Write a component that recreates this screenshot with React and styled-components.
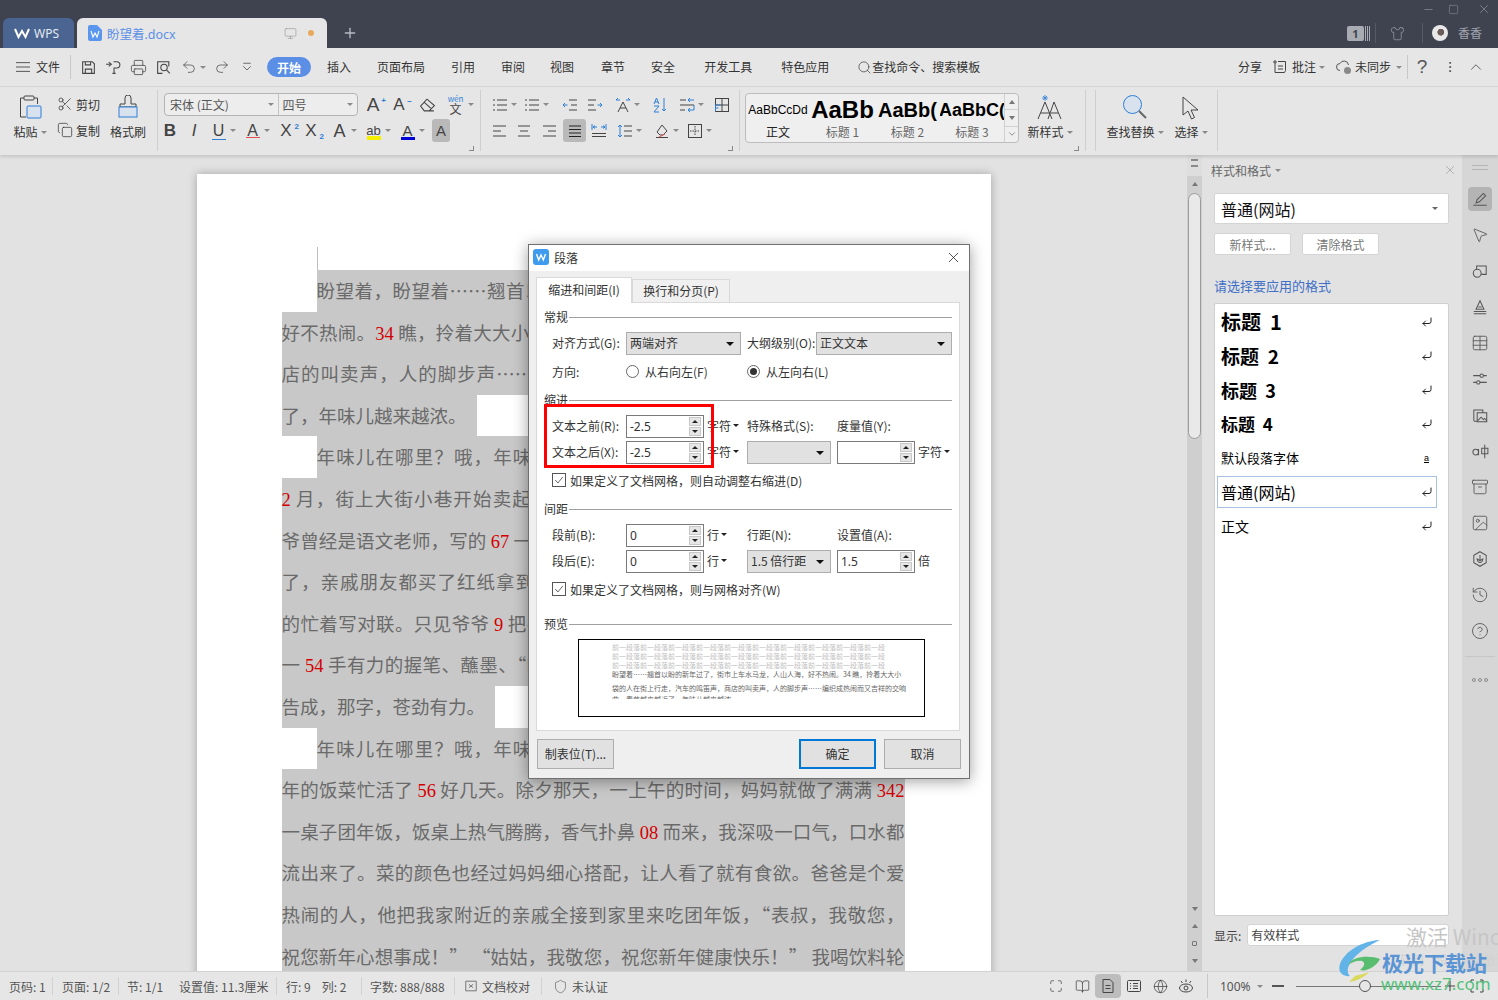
import styled, { createGlobalStyle } from "styled-components";
import {
  Scissors,
  Printer,
  Undo2,
  Redo2,
  Search,
  Shirt,
  Monitor,
  X,
  Plus,
  History,
  Image,
  Table,
  Archive,
  Minus,
  Square,
  ChevronUp,
  ChevronDown,
  CornerDownLeft,
  MoreVertical,
  Globe,
  Shield,
  BookOpen,
  CircleHelp,
  Maximize,
  MousePointer2,
  Copy,
} from "lucide-react";

const UI_FONT = `"Noto Sans", "Noto Sans CJK SC", sans-serif`;
const CJK_FONT = `"Noto Sans CJK SC", "Noto Sans", sans-serif`;

const GlobalStyle = createGlobalStyle`
  html, body { margin: 0; padding: 0; background: #e2e2e2; }
  body { font-family: ${UI_FONT}; font-size: 12px; color: #333; }
  * { box-sizing: border-box; }
`;

/* ---------- shell ---------- */
const Shell = styled.div`
  position: relative;
  width: 1498px;
  height: 1000px;
  overflow: hidden;
  display: flex;
  flex-direction: column;
`;

/* ---------- title bar ---------- */
const TitleBar = styled.div`
  height: 48px;
  flex: none;
  background: #3f4350;
  display: flex;
  align-items: flex-end;
  padding-left: 3px;
`;
const WpsTab = styled.div`
  width: 71px;
  height: 30px;
  background: #4a6591;
  border-radius: 6px 6px 0 0;
  color: #e4e9f2;
  display: flex;
  align-items: center;
  padding-left: 10px;
  gap: 3px;
  font-size: 12px;
`;
const DocTab = styled.div`
  width: 250px;
  height: 30px;
  margin-left: 3px;
  background: #e6e6e6;
  border-radius: 6px 6px 0 0;
  display: flex;
  align-items: center;
  padding: 0 10px 0 11px;
  color: #5b8fe6;
  font-size: 12.5px;
  gap: 5px;
`;
const DocTabName = styled.span`
  flex: 1;
`;
const SaveDot = styled.i`
  width: 6px;
  height: 6px;
  margin: 0 3px 0 6px;
  border-radius: 50%;
  background: #e9a860;
`;
const NewTab = styled.div`
  margin: 0 0 7px 15px;
  color: #b9bcc4;
  height: 16px;
`;
const TitleRight = styled.div`
  margin-left: auto;
  align-self: stretch;
  display: flex;
  flex-direction: column;
  color: #9fa3ad;
`;
const WinControls = styled.div`
  height: 18px;
  display: flex;
  justify-content: flex-end;
  align-items: center;
  padding-right: 2px;
`;
const WinBtn = styled.span`
  width: 24px;
  margin-left: ${(p) => p.$ml || 0}px;
  display: inline-flex;
  justify-content: center;
`;
const UserRow = styled.div`
  flex: 1;
  display: flex;
  align-items: center;
  padding-right: 16px;
  font-size: 12px;
`;
const LevelBadge = styled.div`
  width: 17px;
  height: 15px;
  border-radius: 2px;
  background: #a9abb3;
  color: #3f4350;
  font-size: 11px;
  font-weight: 700;
  text-align: center;
  line-height: 15px;
`;
const BadgeBars = styled.div`
  width: 5px;
  height: 15px;
  margin-left: 1px;
  border-left: 1px solid #a9abb3;
  border-right: 1px solid #a9abb3;
  background: linear-gradient(90deg, transparent 40%, #a9abb3 40%, #a9abb3 60%, transparent 60%);
`;
const TitleSep = styled.i`
  width: 1px;
  height: 20px;
  background: #565a67;
  margin: 0 ${(p) => p.$r}px 0 ${(p) => p.$l}px;
`;
const Avatar = styled.div`
  width: 16px;
  height: 16px;
  border-radius: 50%;
  margin-right: 10px;
  background: radial-gradient(circle at 55% 45%, #6b5a5a 0 25%, #e8e8e8 30%);
`;

/* ---------- menu row ---------- */
const MenuBar = styled.div`
  height: 39px;
  flex: none;
  background: #e6e6e6;
  border-bottom: 1px solid #d6d6d6;
  display: flex;
  align-items: center;
  padding-left: 16px;
  color: #333;
`;
const MenuText = styled.span`
  margin-left: ${(p) => p.$ml || 0}px;
  font-size: 12px;
  line-height: 16px;
  white-space: nowrap;
  font-family: ${CJK_FONT};
`;
const HelpMark = styled.span`
  font-size: 19px;
  line-height: 20px;
  font-weight: 300;
  color: #555;
  font-family: "Liberation Sans", sans-serif;
`;
const StartPill = styled.span`
  margin-left: 7px;
  width: 44px;
  height: 20px;
  border-radius: 10px;
  background: #5b8fe6;
  color: #fff;
  font-size: 12px;
  font-weight: 700;
  font-family: ${CJK_FONT};
  display: flex;
  align-items: center;
  justify-content: center;
`;
const MenuSep = styled.i`
  width: 1px;
  height: 24px;
  background: #c8c8c8;
  margin-left: ${(p) => p.$ml || 0}px;
  margin-right: ${(p) => p.$mr || 0}px;
`;
const Slot = styled.span`
  width: ${(p) => p.$w || 25}px;
  margin-left: ${(p) => p.$ml || 0}px;
  flex: none;
  display: inline-flex;
  align-items: center;
  justify-content: center;
  gap: ${(p) => p.$gap || 0}px;
  color: ${(p) => p.$color || "#444"};
`;
const Caret = styled.i`
  display: inline-block;
  flex: none;
  width: 0;
  height: 0;
  border-left: 3px solid transparent;
  border-right: 3px solid transparent;
  border-top: 3px solid ${(p) => p.$c || "#8a8a8a"};
  margin-left: ${(p) => p.$ml || 0}px;
`;
const MenuRight = styled.div`
  margin-left: auto;
  display: flex;
  align-items: center;
`;

/* ---------- ribbon ---------- */
const Ribbon = styled.div`
  height: 68px;
  flex: none;
  background: #e6e6e6;
  display: flex;
  box-shadow: 0 2px 3px rgba(0, 0, 0, 0.13);
  position: relative;
  z-index: 2;
`;
const RibbonGroup = styled.div`
  position: relative;
  width: ${(p) => p.$w}px;
  flex: none;
  padding: 6px 0 0 ${(p) => p.$pl || 0}px;
  display: ${(p) => (p.$row ? "flex" : "block")};
  &::after {
    content: "";
    position: absolute;
    right: 0;
    top: 3px;
    bottom: 4px;
    width: 1px;
    background: #cfcfcf;
  }
`;
const Launcher = styled.i`
  position: absolute;
  right: 7px;
  bottom: 4px;
  width: 5px;
  height: 5px;
  border-right: 1px solid #888;
  border-bottom: 1px solid #888;
`;
const ToolRow = styled.div`
  display: flex;
  height: 23px;
  align-items: center;
  margin-top: ${(p) => p.$mt || 0}px;
`;
const Tool = styled.span`
  width: ${(p) => p.$w}px;
  margin-left: ${(p) => p.$ml || 0}px;
  flex: none;
  height: 23px;
  display: inline-flex;
  align-items: center;
  justify-content: center;
  gap: 3px;
  color: #444;
  border-radius: 3px;
  background: ${(p) => (p.$on ? "#b9b9b9" : "transparent")};
`;
const BigTool = styled.div`
  width: ${(p) => p.$w}px;
  margin-left: ${(p) => p.$ml || 0}px;
  flex: none;
  display: flex;
  flex-direction: column;
  align-items: center;
`;
const BigIcon = styled.div`
  height: 28px;
  display: flex;
  align-items: center;
  justify-content: center;
`;
const BigLabel = styled.div`
  margin-top: 3px;
  display: flex;
  align-items: center;
  gap: 3px;
  font-family: ${CJK_FONT};
  font-size: 12px;
  line-height: 16px;
  white-space: nowrap;
`;
const SmallStack = styled.div`
  margin-left: ${(p) => p.$ml || 0}px;
  display: flex;
  flex-direction: column;
  gap: 8px;
  padding-top: 2px;
`;
const SmallTool = styled.div`
  height: 18px;
  display: flex;
  align-items: center;
  gap: 3px;
  font-family: ${CJK_FONT};
`;
const FontBox = styled.div`
  width: 194px;
  height: 23px;
  margin-left: 6px;
  background: #ededed;
  border: 1px solid #b4b4b4;
  border-radius: 4px;
  display: flex;
  flex: none;
  color: #555;
  font-family: ${CJK_FONT};
`;
const FontPart = styled.div`
  width: ${(p) => p.$w}px;
  display: flex;
  align-items: center;
  justify-content: space-between;
  padding: 0 4px 0 ${(p) => p.$pl}px;
  border-right: ${(p) => (p.$div ? "1px solid #c4c4c4" : "0")};
`;
const Glyph = styled.span`
  position: relative;
  width: 16px;
  height: 18px;
  text-align: center;
  font-size: ${(p) => p.$size || 15}px;
  line-height: 18px;
  font-weight: ${(p) => p.$weight || 400};
  font-style: ${(p) => (p.$italic ? "italic" : "normal")};
  color: ${(p) => p.$color || "#444"};
  font-family: "Liberation Sans", sans-serif;
`;
const Sup = styled.span`
  position: absolute;
  right: -5px;
  top: ${(p) => p.$top}px;
  font-size: 8px;
  line-height: 8px;
  font-weight: 700;
  color: #2f7fd6;
`;
const UnderBar = styled.i`
  position: absolute;
  left: 1px;
  right: 1px;
  bottom: ${(p) => p.$b || 0}px;
  height: ${(p) => p.$h || 2}px;
  background: ${(p) => p.$c};
`;
const WenStack = styled.span`
  width: 18px;
  display: flex;
  flex-direction: column;
  align-items: center;
  color: #2f7fd6;
  font-size: 8px;
  line-height: 8px;
  font-family: ${CJK_FONT};
`;
const WenChar = styled.span`
  color: #444;
  font-size: 12px;
  line-height: 12px;
`;
const Gallery = styled.div`
  width: 274px;
  height: 50px;
  margin-left: 5px;
  flex: none;
  background: #efefef;
  border: 1px solid #bdbdbd;
  border-radius: 4px;
  display: flex;
  overflow: hidden;
`;
const StyleCell = styled.div`
  width: ${(p) => p.$w}px;
  flex: none;
  display: flex;
  flex-direction: column;
  align-items: center;
  overflow: hidden;
`;
const StyleSample = styled.div`
  height: 32px;
  width: 100%;
  display: flex;
  align-items: center;
  justify-content: center;
  overflow: hidden;
  white-space: nowrap;
  color: #000;
  font-family: "Liberation Sans", sans-serif;
  font-size: ${(p) => p.$size}px;
  font-weight: ${(p) => (p.$bold ? 700 : 400)};
`;
const StyleName = styled.div`
  font-family: ${CJK_FONT};
  font-size: 12px;
  line-height: 16px;
  margin-top: -2px;
  color: ${(p) => p.$c || "#666"};
`;
const GalleryScroll = styled.div`
  margin-left: auto;
  width: 14px;
  border-left: 1px solid #d0d0d0;
  display: flex;
  flex-direction: column;
`;
const GalleryBtn = styled.div`
  flex: 1;
  display: flex;
  align-items: center;
  justify-content: center;
  border-bottom: ${(p) => (p.$last ? "0" : "1px solid #d0d0d0")};
  color: #777;
`;

/* ---------- workspace ---------- */
const Workspace = styled.div`
  flex: 1;
  min-height: 0;
  display: flex;
  background: #e2e2e2;
`;
const DocArea = styled.div`
  width: 1187px;
  flex: none;
  display: flex;
  justify-content: center;
  padding-top: 19px;
  overflow: hidden;
`;
const Page = styled.div`
  position: relative;
  width: 794px;
  height: 900px;
  flex: none;
  background: #fff;
  box-shadow: 0 0 9px rgba(0, 0, 0, 0.28);
  padding: 96px 0 0 85px;
`;
const CropMark = styled.i`
  position: absolute;
  left: 120px;
  top: 73px;
  width: 1px;
  height: 23px;
  background: #bdbdbd;
`;
const Line = styled.div`
  height: 41.6px;
  overflow: hidden;
  margin-left: ${(p) => (p.$indent ? 35 : 0)}px;
  width: ${(p) => (p.$short ? "fit-content" : p.$indent ? "588px" : "623px")};
  padding-right: ${(p) => (p.$short ? 10 : 0)}px;
  background: #c8c8c8;
  color: #6a6a6a;
  font-family: ${CJK_FONT};
  font-size: 18.5px;
  line-height: 40px;
  text-align: ${(p) => (p.$short ? "left" : "justify")};
  text-align-last: ${(p) => (p.$short ? "left" : "justify")};
`;
const Num = styled.span`
  color: #d40000;
  font-family: "Liberation Serif", serif;
`;
const ScrollCol = styled.div`
  width: 15px;
  flex: none;
  background: #cfcfcf;
  display: flex;
  flex-direction: column;
  align-items: center;
  color: #777;
`;
const ScrollTop = styled.div`
  height: 38px;
  width: 100%;
  background: linear-gradient(#dedede 0 21px, #cfcfcf 21px);
  display: flex;
  flex-direction: column;
  align-items: center;
  justify-content: space-between;
  padding: 4px 0 7px;
`;
const ScrollThumb = styled.div`
  width: 13px;
  height: 246px;
  flex: none;
  background: #e9e9e9;
  border: 1px solid #9c9c9c;
  border-radius: 7px;
`;
const ScrollBottom = styled.div`
  margin-top: auto;
  height: 64px;
  display: flex;
  flex-direction: column;
  align-items: center;
  justify-content: space-between;
  padding-bottom: 8px;
`;
const UpArrow = styled.i`
  width: 0;
  height: 0;
  border-left: 3px solid transparent;
  border-right: 3px solid transparent;
  border-bottom: 4px solid #777;
`;
const DownArrow = styled.i`
  width: 0;
  height: 0;
  border-left: 3px solid transparent;
  border-right: 3px solid transparent;
  border-top: 4px solid #777;
`;
const ScrollDot = styled.i`
  width: 5px;
  height: 5px;
  border: 1px solid #777;
  border-radius: 1px;
`;
const GripLines = styled.i`
  width: 7px;
  height: 8px;
  border-top: 2px solid #8a8a8a;
  border-bottom: 2px solid #8a8a8a;
`;

/* ---------- styles panel ---------- */
const Panel = styled.div`
  width: 260px;
  flex: none;
  background: #e2e2e2;
  padding: 7px 13px 0 12px;
  display: flex;
  flex-direction: column;
  font-family: ${CJK_FONT};
`;
const PanelHead = styled.div`
  height: 16px;
  margin-left: -3px;
  display: flex;
  align-items: center;
  gap: 4px;
  font-size: 12px;
  color: #666;
`;
const PanelClose = styled.span`
  margin-left: auto;
  color: #888;
  margin-right: -8px;
  height: 14px;
`;
const StyleSelect = styled.div`
  height: 31px;
  margin-top: 15px;
  background: #fff;
  border: 1px solid #d4d4d4;
  border-radius: 2px;
  display: flex;
  align-items: center;
  justify-content: space-between;
  padding: 0 10px 0 6px;
  font-size: 16px;
  color: #111;
`;
const PanelBtns = styled.div`
  display: flex;
  gap: 11px;
  margin-top: 9px;
`;
const PanelBtn = styled.div`
  width: ${(p) => p.$w}px;
  height: 22px;
  background: #fff;
  border: 1px solid #d4d4d4;
  border-radius: 2px;
  color: #777;
  font-size: 12px;
  display: flex;
  align-items: center;
  justify-content: center;
`;
const PanelLink = styled.div`
  margin-top: 22px;
  height: 18px;
  line-height: 18px;
  font-size: 13px;
  color: #3f6fc6;
`;
const StyleList = styled.div`
  margin-top: 8px;
  height: 613px;
  background: #fff;
  border: 1px solid #cfcfcf;
  border-radius: 2px;
  padding: 1px 11px 0 2px;
`;
const StyleItem = styled.div`
  display: flex;
  align-items: center;
  justify-content: space-between;
  padding: 0 4px 1px 4px;
  color: #000;
  font-size: ${(p) => p.$size || 14}px;
  font-weight: ${(p) => p.$weight || 400};
  white-space: pre;
  box-shadow: ${(p) => (p.$on ? "inset 0 0 0 1px #a9c2e2" : "none")};
  height: ${(p) => (p.$on ? 32 : 34)}px;
  margin: ${(p) => (p.$on ? "1px 0" : "0")};
`;
const DefaultMark = styled.span`
  font-size: 9px;
  text-decoration: underline;
  font-family: "Liberation Sans", sans-serif;
  margin-right: 4px;
  font-weight: 400;
`;
const PanelFoot = styled.div`
  margin-top: 8px;
  display: flex;
  align-items: center;
  gap: 6px;
  color: #444;
`;
const ShowSelect = styled.div`
  flex: 1;
  height: 22px;
  background: #fff;
  border: 1px solid #d4d4d4;
  border-radius: 3px;
  padding-left: 3px;
  line-height: 20px;
  color: #444;
`;

/* ---------- right rail ---------- */
const Rail = styled.div`
  flex: 1;
  background: #d6d6d6;
  display: flex;
  flex-direction: column;
  align-items: center;
  color: #555;
`;
const RailGrip = styled.i`
  width: 16px;
  height: 5px;
  margin: 10px 0 17px;
  border-top: 1px solid #b5b5b5;
  border-bottom: 1px solid #b5b5b5;
`;
const RailBtn = styled.div`
  width: 24px;
  height: 24px;
  margin-bottom: 12px;
  border-radius: 4px;
  display: flex;
  align-items: center;
  justify-content: center;
  background: ${(p) => (p.$on ? "#b4b4b4" : "transparent")};
`;
const RailDivider = styled.i`
  width: 30px;
  height: 1px;
  background: #c6c6c6;
  margin-top: 1px;
`;
const RailMore = styled.div`
  margin-top: 21px;
  display: flex;
  gap: 2px;
`;
const MoreDot = styled.i`
  width: 4px;
  height: 4px;
  border: 1px solid #888;
  border-radius: 50%;
`;

/* ---------- status bar ---------- */
const StatusBar = styled.div`
  height: 29px;
  flex: none;
  background: #e6e6e6;
  border-top: 1px solid #d2d2d2;
  display: flex;
  align-items: center;
  color: #555;
  font-size: 12px;
  position: relative;
  z-index: 1;
`;
const StatusCell = styled.div`
  width: ${(p) => p.$w}px;
  height: 18px;
  flex: none;
  padding-left: ${(p) => p.$pl}px;
  display: flex;
  align-items: center;
  gap: ${(p) => p.$gap || 0}px;
  white-space: nowrap;
  font-family: ${CJK_FONT};
  border-right: ${(p) => (p.$noline ? "0" : "1px solid #d2d2d2")};
`;
const StatusRight = styled.div`
  margin-left: auto;
  display: flex;
  align-items: center;
  padding-right: 3px;
`;
const ViewBtn = styled.span`
  width: ${(p) => p.$w || 26}px;
  height: 24px;
  display: inline-flex;
  align-items: center;
  justify-content: center;
  border-radius: 4px;
  background: ${(p) => (p.$on ? "#bdbdbd" : "transparent")};
  color: #444;
`;
const ZoomLabel = styled.span`
  margin-left: 12px;
  display: inline-flex;
  align-items: center;
  gap: 6px;
  width: 46px;
  font-family: "Noto Sans", sans-serif;
`;
const ZoomMinus = styled.i`
  width: 12px;
  height: 2px;
  background: #555;
  margin-left: 6px;
`;
const ZoomTrack = styled.div`
  position: relative;
  width: 145px;
  height: 1px;
  margin-left: 12px;
  background: #777;
`;
const ZoomKnob = styled.i`
  position: absolute;
  left: 63px;
  top: -6px;
  width: 12px;
  height: 12px;
  border-radius: 50%;
  border: 1px solid #555;
  background: #e6e6e6;
`;

/* ---------- paragraph dialog ---------- */
const Dialog = styled.div`
  position: absolute;
  left: 528px;
  top: 244px;
  width: 442px;
  height: 535px;
  background: #efefef;
  border: 1px solid #707070;
  box-shadow: 0 2px 14px rgba(0, 0, 0, 0.38);
  display: flex;
  flex-direction: column;
  z-index: 5;
  font-family: ${CJK_FONT};
  font-size: 12px;
  color: #333;
`;
const DialogTitle = styled.div`
  height: 26px;
  flex: none;
  background: #fff;
  display: flex;
  align-items: center;
  padding: 0 7px 2px 4px;
  gap: 5px;
  color: #333;
`;
const DialogClose = styled.span`
  margin-left: auto;
  height: 17px;
  color: #222;
`;
const TabStrip = styled.div`
  height: 31px;
  flex: none;
  padding: 6px 0 0 7px;
  display: flex;
  align-items: flex-end;
`;
const DlgTab = styled.div`
  width: ${(p) => p.$w}px;
  height: ${(p) => (p.$on ? 26 : 23)}px;
  background: ${(p) => (p.$on ? "#fff" : "#f0f0f0")};
  border: 1px solid #d9d9d9;
  border-bottom: 0;
  padding-bottom: 2px;
  display: flex;
  align-items: center;
  justify-content: center;
  margin-bottom: ${(p) => (p.$on ? -1 : 0)}px;
  position: relative;
  z-index: ${(p) => (p.$on ? 1 : 0)};
`;
const TabPanel = styled.div`
  width: 424px;
  height: 429px;
  flex: none;
  margin-left: 7px;
  background: #fff;
  border: 1px solid #d9d9d9;
  padding: 6px 7px 0;
`;
const SectionHead = styled.div`
  height: 16px;
  margin-top: ${(p) => p.$mt || 0}px;
  display: flex;
  align-items: center;
  line-height: 16px;
  gap: 1px;
  &::after {
    content: "";
    flex: 1;
    height: 1px;
    background: #a0a0a0;
  }
`;
const FormRow = styled.div`
  height: ${(p) => p.$h || 23}px;
  margin: ${(p) => p.$mt || 0}px 0 0 8px;
  display: grid;
  grid-template-columns: ${(p) => p.$cols || "74px 78px 43px 90px 78px auto"};
  align-items: center;
  white-space: nowrap;
  & > span {
    padding-bottom: 2px;
  }
`;
const Select = styled.div`
  width: ${(p) => p.$w}px;
  height: 23px;
  background: #e1e1e1;
  border: 1px solid #adadad;
  padding: 0 6px 2px 3px;
  display: flex;
  align-items: center;
  justify-content: space-between;
  color: #333;
`;
const BlackCaret = styled.i`
  width: 0;
  height: 0;
  margin-top: 2px;
  border-left: 4px solid transparent;
  border-right: 4px solid transparent;
  border-top: 4px solid #111;
`;
const Spin = styled.div`
  width: 78px;
  height: 23px;
  background: #fff;
  border: 1px solid #7a7a7a;
  display: flex;
  align-items: center;
  padding-left: 3px;
  font-family: "Noto Sans", sans-serif;
  position: relative;
`;
const SpinBtns = styled.div`
  margin-left: auto;
  margin-right: 1px;
  width: 14px;
  height: 100%;
  padding: 1px;
  display: flex;
  flex-direction: column;
  gap: 1px;
`;
const SpinBtn = styled.div`
  flex: 1;
  background: #e6e6e6;
  border: 1px solid #c8c8c8;
  display: flex;
  align-items: center;
  justify-content: center;
`;
const SpinUp = styled.i`
  border-left: 3px solid transparent;
  border-right: 3px solid transparent;
  border-bottom: 3px solid #222;
`;
const SpinDown = styled.i`
  border-left: 3px solid transparent;
  border-right: 3px solid transparent;
  border-top: 3px solid #222;
`;
const Unit = styled.span`
  padding-left: 3px;
  display: inline-flex;
  align-items: center;
  gap: 2px;
`;
const Radio = styled.i`
  width: 13px;
  height: 13px;
  border: 1px solid #666;
  border-radius: 50%;
  background: #fff;
  display: inline-flex;
  align-items: center;
  justify-content: center;
  margin-right: 6px;
  &::after {
    content: "";
    width: 7px;
    height: 7px;
    border-radius: 50%;
    background: ${(p) => (p.$on ? "#333" : "transparent")};
  }
`;
const RadioLabel = styled.span`
  display: inline-flex;
  align-items: center;
`;
const CheckRow = styled.div`
  height: 18px;
  margin: ${(p) => p.$mt}px 0 0 8px;
  padding-bottom: 2px;
  display: flex;
  align-items: center;
  gap: 4px;
`;
const CheckBox = styled.span`
  width: 14px;
  height: 14px;
  background: #fff;
  border: 1px solid #555;
  display: inline-flex;
  align-items: center;
  justify-content: center;
`;
const Preview = styled.div`
  width: 347px;
  height: 78px;
  margin: 7px 0 0 34px;
  border: 1px solid #000;
  background: #fff;
  padding: 3px 16px 0 33px;
  overflow: hidden;
  font-size: 7px;
  line-height: 9px;
  white-space: nowrap;
`;
const PreviewGrey = styled.div`
  color: #c0c0c0;
`;
const PreviewDark = styled.div`
  color: #666;
  margin-top: ${(p) => p.$mt || 0}px;
  height: ${(p) => p.$h || 9}px;
  overflow: hidden;
`;
const DialogFoot = styled.div`
  margin: 8px 8px 0 8px;
  display: flex;
`;
const DlgBtn = styled.div`
  width: 77px;
  height: 30px;
  margin-left: ${(p) => p.$ml || 0}px;
  padding-bottom: 2px;
  background: #e1e1e1;
  border: ${(p) => (p.$primary ? "2px solid #0078d7" : "1px solid #adadad")};
  display: flex;
  align-items: center;
  justify-content: center;
`;
const RedFrame = styled.div`
  position: absolute;
  left: 15px;
  top: 159px;
  width: 170px;
  height: 64px;
  border: 3px solid #f00;
  pointer-events: none;
`;

/* ---------- watermark ---------- */
const Watermark = styled.div`
  position: absolute;
  right: 0;
  bottom: 0;
  width: 160px;
  height: 80px;
  z-index: 6;
  pointer-events: none;
  overflow: hidden;
`;
const ActivateText = styled.div`
  position: absolute;
  left: 68px;
  top: 4px;
  font-size: 21px;
  line-height: 24px;
  color: #c6c6c6;
  white-space: nowrap;
  font-family: ${CJK_FONT};
`;
const ActivateHint = styled.div`
  position: absolute;
  left: 62px;
  top: 32px;
  font-size: 12px;
  line-height: 16px;
  color: #d2d2d2;
  white-space: nowrap;
  font-family: ${CJK_FONT};
`;
const BrandName = styled.div`
  position: absolute;
  left: 44px;
  top: 30px;
  font-size: 21px;
  line-height: 24px;
  font-weight: 700;
  color: #5a94d4;
  font-family: ${CJK_FONT};
  white-space: nowrap;
`;
const BrandUrl = styled.div`
  position: absolute;
  left: 43px;
  top: 54px;
  font-size: 17px;
  line-height: 20px;
  color: #55c27a;
  white-space: nowrap;
`;
const BrandSwirl = styled.svg`
  position: absolute;
  left: 0;
  top: 19px;
`;

/* ---------- icons ---------- */
const I = ({ s = 16, c = "#444", sw = 1, children }) => (
  <svg width={s} height={s} viewBox="0 0 16 16" fill="none" stroke={c} strokeWidth={sw}>
    {children}
  </svg>
);
const R = ({ children }) => (
  <I s={18} c="#555" sw={0.9}>
    {children}
  </I>
);
const L = { size: 18, strokeWidth: 1.15 };

const Lines = ({ rows, c = "#444" }) => (
  <I c={c}>
    {rows.map(([x1, x2, y, col], i) => (
      <path key={i} d={`M${x1} ${y}H${x2}`} stroke={col || c} />
    ))}
  </I>
);

const ReturnMark = () => <CornerDownLeft size={12} strokeWidth={2} color="#222" />;

const WLogo = ({ c = "#fff" }) => (
  <path d="M3.5 5l2.2 6 2.3-5 2.3 5 2.2-6" fill="none" stroke={c} strokeWidth="1.4" />
);

const Spinner = ({ value }) => (
  <Spin>
    {value}
    <SpinBtns>
      <SpinBtn>
        <SpinUp />
      </SpinBtn>
      <SpinBtn>
        <SpinDown />
      </SpinBtn>
    </SpinBtns>
  </Spin>
);

/* ---------- data ---------- */
const docLines = [
  { indent: true, t: "盼望着，盼望着……翘首以盼的新年过了，街市上车水马龙，人山人海" },
  { t: "好不热闹。{34} 瞧，拎着大大小小的袋子的人在街上行走，汽车的鸣笛声，商" },
  { t: "店的叫卖声，人的脚步声……编织成热闹而又吉祥的交响曲。春节越来越" },
  { short: true, t: "了，年味儿越来越浓。" },
  { indent: true, t: "年味儿在哪里？哦，年味儿在爷爷的春联里。每年进入农历的腊月，" },
  { t: "{2} 月，街上大街小巷开始卖起了春联，可是我家从来不买春联，因为我爷" },
  { t: "爷曾经是语文老师，写的 {67} 一手好毛笔字，每到过年的时候就忙开了，街坊" },
  { t: "了，亲戚朋友都买了红纸拿到爷爷家里，请爷爷帮忙写春联，爷爷总是乐" },
  { t: "的忙着写对联。只见爷爷 {9} 把手一挥，摊开红纸，铺在桌子上，然后挥毫泼" },
  { t: "一 {54} 手有力的握笔、蘸墨、“唰唰唰”几下，一副对联就大功告成了，大功" },
  { short: true, t: "告成，那字，苍劲有力。" },
  { indent: true, t: "年味儿在哪里？哦，年味儿在妈妈的饭菜里。为了准备这顿团圆的过" },
  { t: "年的饭菜忙活了 {56} 好几天。除夕那天，一上午的时间，妈妈就做了满满 {342}" },
  { t: "一桌子团年饭，饭桌上热气腾腾，香气扑鼻 {08} 而来，我深吸一口气，口水都" },
  { t: "流出来了。菜的颜色也经过妈妈细心搭配，让人看了就有食欲。爸爸是个爱" },
  { t: "热闹的人，他把我家附近的亲戚全接到家里来吃团年饭，“表叔，我敬您，" },
  { t: "祝您新年心想事成！” “姑姑，我敬您，祝您新年健康快乐！” 我喝饮料轮" },
  { t: "流给亲戚们敬酒，大家都笑得合不拢嘴，一家人其乐融融，年味儿真浓啊" },
];

const previewGrey = "前一段落".repeat(10).slice(0, 39);

const renderLine = (t) =>
  t.split(/(\{\d+\})/).map((part, i) =>
    /^\{\d+\}$/.test(part) ? <Num key={i}>{part.slice(1, -1)}</Num> : part
  );

const styleItems = [
  { name: "标题  1", size: 20, weight: 700 },
  { name: "标题  2", size: 19, weight: 700 },
  { name: "标题  3", size: 18, weight: 700 },
  { name: "标题  4", size: 17, weight: 700 },
  { name: "默认段落字体", size: 13, mark: "a" },
  { name: "普通(网站)", size: 16, on: true },
  { name: "正文", size: 14 },
];

const railIcons = [
  <R key="a"><path d="M2 13.5h12M4.5 11.5l1-3L11 3l2 2-5.5 5.5z" /></R>,
  <MousePointer2 key="b" {...L} />,
  <R key="c"><circle cx="5.5" cy="10" r="3.5" /><path d="M5 6.5V3.5h8.5V11H9" /></R>,
  <R key="d"><path d="M4.5 10L8 2.5l3.5 7.5zM6.5 8h3M2.5 12h11M2.5 14h11" /></R>,
  <Table key="e" {...L} />,
  <R key="f"><path d="M2 5h6M11 5h3M2 11h3M8 11h6" /><circle cx="9.5" cy="5" r="1.5" /><circle cx="6.5" cy="11" r="1.5" /></R>,
  <R key="g"><path d="M2.5 13V3.5h8V6M2.5 13.5h3" /><rect x="5.5" y="6" width="8.5" height="8" /><path d="M6 13l3-3 2 2 1-1 2 2" /></R>,
  <R key="h"><circle cx="4.2" cy="9" r="2.5" /><path d="M6.7 6.2v5.5M9.5 5.5h5.5v5H9.5zM12.2 2.5v12" /></R>,
  <Archive key="i" {...L} />,
  <Image key="j" {...L} />,
  <R key="k"><path d="M8 1.5l5.5 3.2v6.6L8 14.5l-5.5-3.2V4.7z" /><path d="M5.5 8c0 2 1.5 3 2.5 3s2.5-1 2.5-3L8 9.5zM8 4.5v5" /></R>,
  <History key="l" {...L} />,
  <CircleHelp key="m" {...L} />,
];

const App = () => (
  <Shell>
    <GlobalStyle />

    <TitleBar>
      <WpsTab>
        <svg width="18" height="12" viewBox="0 0 16 12">
          <path d="M1 2l3.5 8L8 4l3.5 6L15 2" fill="none" stroke="#fff" strokeWidth="2" />
        </svg>
        WPS
      </WpsTab>
      <DocTab>
        <svg width="14" height="16" viewBox="0 0 14 16">
          <path d="M2 0h7l5 5v9a2 2 0 0 1-2 2H2a2 2 0 0 1-2-2V2a2 2 0 0 1 2-2z" fill="#5b96ee" />
          <path d="M3 6l2 6 2-4 2 4 2-6" fill="none" stroke="#fff" strokeWidth="1.1" />
        </svg>
        <DocTabName>盼望着.docx</DocTabName>
        <Monitor size={13} strokeWidth={1.2} color="#999" />
        <SaveDot />
      </DocTab>
      <NewTab>
        <Plus size={16} strokeWidth={2} />
      </NewTab>
      <TitleRight>
        <WinControls>
          <WinBtn>
            <Minus size={13} strokeWidth={1} />
          </WinBtn>
          <WinBtn $ml={1}>
            <Square size={11} strokeWidth={1} />
          </WinBtn>
          <WinBtn $ml={7}>
            <X size={14} strokeWidth={1} />
          </WinBtn>
        </WinControls>
        <UserRow>
          <LevelBadge>1</LevelBadge>
          <BadgeBars />
          <TitleSep $l={5} $r={14} />
          <Shirt size={15} strokeWidth={1.1} />
          <TitleSep $l={17} $r={9} />
          <Avatar />
          香香
        </UserRow>
      </TitleRight>
    </TitleBar>

    <MenuBar>
      <I s={14}><path d="M0 3h16M0 8h16M0 13h16" /></I>
      <MenuText $ml={6}>文件</MenuText>
      <MenuSep $ml={10} $mr={5} />
      <Slot>
        <I s={17}><path d="M2.5 2.5h9l2 2v9h-11zM5 2.5v3h5v-3M5 13.5v-4h6v4" /></I>
      </Slot>
      <Slot>
        <I s={17}><path d="M1 5h4M3.5 3L6 5 3.5 7M8 2.5h3a3 3 0 0 1 0 6H8.5v5M7 13.5h3" /></I>
      </Slot>
      <Slot>
        <Printer size={17} strokeWidth={1.1} />
      </Slot>
      <Slot>
        <I s={17}><path d="M13 7V2.5H2.5v11H7" /><circle cx="8.5" cy="8" r="3" /><path d="M11 10.5l3 3" /></I>
      </Slot>
      <Slot $w={34} $gap={3}>
        <Undo2 size={16} strokeWidth={1.1} />
        <Caret />
      </Slot>
      <Slot $w={24}>
        <Redo2 size={16} strokeWidth={1.1} />
      </Slot>
      <Slot $w={26}>
        <I s={12}><path d="M3 3h10M3 7l5 5 5-5" /></I>
      </Slot>
      <StartPill>开始</StartPill>
      <MenuText $ml={16}>插入</MenuText>
      <MenuText $ml={26}>页面布局</MenuText>
      <MenuText $ml={26}>引用</MenuText>
      <MenuText $ml={26}>审阅</MenuText>
      <MenuText $ml={25}>视图</MenuText>
      <MenuText $ml={27}>章节</MenuText>
      <MenuText $ml={26}>安全</MenuText>
      <MenuText $ml={29}>开发工具</MenuText>
      <MenuText $ml={29}>特色应用</MenuText>
      <Slot $w={16} $ml={27}>
        <Search size={15} strokeWidth={1.2} />
      </Slot>
      <MenuText>查找命令、搜索模板</MenuText>
      <MenuRight>
        <MenuText>分享</MenuText>
        <Slot $w={16} $ml={10}>
          <I><path d="M3 4.5V13.5h9.5l1-2V2.5H6M1 3h4M3 1v4M6 7h5M6 10h5" /></I>
        </Slot>
        <MenuText $ml={4}>批注</MenuText>
        <Caret $ml={3} />
        <Slot $w={18} $ml={10}>
          <svg width="18" height="16" viewBox="0 0 18 16" fill="none" stroke="#555">
            <path d="M5 11.5a3.5 3.5 0 0 1 0-7 4.5 4.5 0 0 1 8.5 1.5" />
            <circle cx="12.5" cy="11.5" r="3.5" fill="#888" stroke="none" />
          </svg>
        </Slot>
        <MenuText $ml={2}>未同步</MenuText>
        <Caret $ml={5} />
        <MenuSep $ml={5} />
        <Slot $w={22} $ml={3}>
          <HelpMark>?</HelpMark>
        </Slot>
        <Slot $w={24} $ml={5}>
          <MoreVertical size={14} strokeWidth={1.4} />
        </Slot>
        <Slot $w={24} $ml={2}>
          <ChevronUp size={18} strokeWidth={1.1} />
        </Slot>
        <Slot $w={10} />
      </MenuRight>
    </MenuBar>

    <Ribbon>
      <RibbonGroup $w={158} $row $pl={12}>
        <BigTool $w={36}>
          <BigIcon>
            <svg width="24" height="26" viewBox="0 0 24 26" fill="none" stroke="#444">
              <path d="M6 4H2.5v19H8M16 4h3.5v6" />
              <rect x="6" y="2" width="10" height="4" rx="1" />
              <rect x="9" y="12" width="14" height="12" rx="1" fill="#d7e2ee" stroke="#2f7fd6" />
            </svg>
          </BigIcon>
          <BigLabel>
            粘贴
            <Caret />
          </BigLabel>
        </BigTool>
        <SmallStack $ml={9}>
          <SmallTool>
            <Scissors size={16} strokeWidth={1.1} />
            剪切
          </SmallTool>
          <SmallTool>
            <Copy size={16} strokeWidth={1.1} />
            复制
          </SmallTool>
        </SmallStack>
        <BigTool $w={36} $ml={10}>
          <BigIcon>
            <svg width="22" height="24" viewBox="0 0 22 24" fill="none" stroke="#444">
              <path d="M8 9V3a3 3 0 0 1 6 0v6h5v3H3V9z" />
              <rect x="2" y="12" width="18" height="10" fill="#d7e2ee" stroke="#2f7fd6" />
            </svg>
          </BigIcon>
          <BigLabel>格式刷</BigLabel>
        </BigTool>
      </RibbonGroup>

      <RibbonGroup $w={323}>
        <ToolRow>
          <FontBox>
            <FontPart $w={115} $pl={5} $div>
              宋体 (正文)
              <Caret />
            </FontPart>
            <FontPart $w={78} $pl={3}>
              四号
              <Caret />
            </FontPart>
          </FontBox>
          <Tool $w={30}>
            <Glyph $size={19}>
              A<Sup $top={1}>+</Sup>
            </Glyph>
          </Tool>
          <Tool $w={22}>
            <Glyph $size={17}>
              A<Sup $top={2}>−</Sup>
            </Glyph>
          </Tool>
          <Tool $w={34}>
            <I s={17}><path d="M1.5 9.5l6-6.5 7 6-5 5H5zM5 6l6 5.5M5 14h9" /></I>
          </Tool>
          <Tool $w={32}>
            <WenStack>
              wén
              <WenChar>文</WenChar>
            </WenStack>
            <Caret />
          </Tool>
        </ToolRow>
        <ToolRow $mt={3}>
          <Tool $w={24}>
            <Glyph $weight={700} $size={17}>B</Glyph>
          </Tool>
          <Tool $w={24}>
            <Glyph $italic $size={17}>I</Glyph>
          </Tool>
          <Tool $w={34}>
            <Glyph $size={16}>
              U
              <UnderBar $c="#2f7fd6" $h={1} />
            </Glyph>
            <Caret />
          </Tool>
          <Tool $w={34}>
            <Glyph $size={16}>
              A
              <UnderBar $c="#e05050" $h={1} $b={2} />
            </Glyph>
            <Caret />
          </Tool>
          <Tool $w={24}>
            <Glyph $size={17}>
              X<Sup $top={1}>2</Sup>
            </Glyph>
          </Tool>
          <Tool $w={26}>
            <Glyph $size={17}>
              X<Sup $top={11}>2</Sup>
            </Glyph>
          </Tool>
          <Tool $w={40}>
            <Glyph $size={18}>A</Glyph>
            <Caret />
          </Tool>
          <Tool $w={28}>
            <Glyph $size={13}>
              ab
              <UnderBar $c="#f5f000" $h={4} />
            </Glyph>
            <Caret />
          </Tool>
          <Tool $w={40}>
            <Glyph $size={15}>
              A
              <UnderBar $c="#0000d8" $h={3} />
            </Glyph>
            <Caret />
          </Tool>
          <Tool $w={18} $on>
            <Glyph $size={15}>A</Glyph>
          </Tool>
        </ToolRow>
        <Launcher />
      </RibbonGroup>

      <RibbonGroup $w={259} $pl={8}>
        <ToolRow>
          <Tool $w={30}>
            <Lines rows={[[1, 3, 3], [5, 15, 3], [1, 3, 8], [5, 15, 8], [1, 3, 13], [5, 15, 13]]} />
            <Caret />
          </Tool>
          <Tool $w={34}>
            <Lines rows={[[1, 3, 3], [5, 15, 3], [1, 3, 8], [5, 15, 8], [1, 3, 13], [5, 15, 13]]} />
            <Caret />
          </Tool>
          <Tool $w={34}>
            <I><path d="M7 3h8M9 8h6M7 13h8" /><path d="M5.5 8H1M3 6L1 8l2 2" stroke="#2f7fd6" /></I>
          </Tool>
          <Tool $w={16}>
            <I><path d="M1 3h8M1 8h6M1 13h8" /><path d="M10.5 8H15M13 6l2 2-2 2" stroke="#2f7fd6" /></I>
          </Tool>
          <Tool $w={48}>
            <I><path d="M3 15L8 5l5 10M5 11h6" /><path d="M1 3h4M1 3l2-2M15 3h-4M15 3l-2-2" stroke="#2f7fd6" /></I>
            <Caret />
          </Tool>
          <Tool $w={18}>
            <I c="#2f7fd6"><path d="M2 7l2.5-6L7 7M3 5h3M2 9h5L2 15h5M12 1v13M10 12l2 2 2-2" /></I>
          </Tool>
          <Tool $w={44}>
            <I><path d="M1 3h6M1 8h14M1 13h5" /><path d="M9 3h6M11 1l-2 2 2 2M15 8v5H9M11 11l-2 2 2 2" stroke="#2f7fd6" /></I>
            <Caret />
          </Tool>
          <Tool $w={18}>
            <I><rect x="1.5" y="1.5" width="13" height="13" /><path d="M8 1.5v13M1.5 8h13" /><path d="M1.5 8v6.5M1.5 8h5M1.5 11h3" stroke="#2f7fd6" /></I>
          </Tool>
        </ToolRow>
        <ToolRow $mt={3}>
          <Tool $w={20}>
            <Lines rows={[[2, 15, 3], [2, 10, 8], [2, 15, 13]]} />
          </Tool>
          <Tool $w={30}>
            <Lines rows={[[2, 14, 3], [4, 12, 8], [2, 14, 13]]} />
          </Tool>
          <Tool $w={20}>
            <Lines rows={[[2, 15, 3], [7, 15, 8], [2, 15, 13]]} />
          </Tool>
          <Tool $w={23} $ml={4} $on>
            <Lines c="#222" rows={[[2, 14, 3], [2, 14, 6.5], [2, 14, 10], [2, 14, 13.5]]} />
          </Tool>
          <Tool $w={26}>
            <I><path d="M1 10.5h14M1 13.5h14" /><path d="M1 1v6M15 1v6M6 4H2M4 2.5L2 4l2 1.5M10 4h4M12 2.5L14 4l-2 1.5" stroke="#2f7fd6" /></I>
          </Tool>
          <Tool $w={34}>
            <I><path d="M7 3h8M7 8h8M7 13h8" /><path d="M3 2v12M1 4l2-2 2 2M1 12l2 2 2-2" stroke="#2f7fd6" /></I>
            <Caret />
          </Tool>
          <Tool $w={40}>
            <I><path d="M3 9l5-7 5 6-4 4H6zM2 14.5h12" /><path d="M5 14l6-3" stroke="#e05050" /></I>
            <Caret />
          </Tool>
          <Tool $w={27}>
            <I><rect x="1.5" y="1.5" width="13" height="13" /><path d="M8 3v10M3 8h10" strokeDasharray="1.5 1" /></I>
            <Caret />
          </Tool>
        </ToolRow>
        <Launcher />
      </RibbonGroup>

      <RibbonGroup $w={346} $row>
        <Gallery>
          <StyleCell $w={64}>
            <StyleSample $size={12}>AaBbCcDd</StyleSample>
            <StyleName $c="#222">正文</StyleName>
          </StyleCell>
          <StyleCell $w={65}>
            <StyleSample $size={24} $bold>AaBb</StyleSample>
            <StyleName>标题 1</StyleName>
          </StyleCell>
          <StyleCell $w={65}>
            <StyleSample $size={20} $bold>AaBb(</StyleSample>
            <StyleName>标题 2</StyleName>
          </StyleCell>
          <StyleCell $w={64}>
            <StyleSample $size={18} $bold>AaBbC(</StyleSample>
            <StyleName>标题 3</StyleName>
          </StyleCell>
          <GalleryScroll>
            <GalleryBtn><UpArrow /></GalleryBtn>
            <GalleryBtn><DownArrow /></GalleryBtn>
            <GalleryBtn $last><ChevronDown size={10} /></GalleryBtn>
          </GalleryScroll>
        </Gallery>
        <BigTool $w={50} $ml={6}>
          <BigIcon>
            <svg width="26" height="26" viewBox="0 0 26 26" fill="none" stroke="#444">
              <path d="M1 25L8 8l7 17M4 19h8M11 25L17 8l7 17M14 19h7" />
              <path d="M8 1v6M5 4h6M6 2l4 4M10 2L6 6" stroke="#2f7fd6" strokeWidth=".8" />
            </svg>
          </BigIcon>
          <BigLabel>
            新样式
            <Caret />
          </BigLabel>
        </BigTool>
        <Launcher />
      </RibbonGroup>

      <RibbonGroup $w={10} />

      <RibbonGroup $w={122} $row $pl={10}>
        <BigTool $w={58}>
          <BigIcon>
            <svg width="26" height="26" viewBox="0 0 26 26" fill="none">
              <circle cx="10.5" cy="10.5" r="9" fill="#d7e2ee" stroke="#2f7fd6" />
              <path d="M17 17l7 7" stroke="#666" strokeWidth="2" />
            </svg>
          </BigIcon>
          <BigLabel>
            查找替换
            <Caret />
          </BigLabel>
        </BigTool>
        <BigTool $w={34} $ml={10}>
          <BigIcon>
            <svg width="18" height="26" viewBox="0 -2 18 26" fill="none" stroke="#444">
              <path d="M1 1v18l5-4 3.5 8 3-1.5L9 14h7z" />
            </svg>
          </BigIcon>
          <BigLabel>
            选择
            <Caret />
          </BigLabel>
        </BigTool>
      </RibbonGroup>
    </Ribbon>

    <Workspace>
      <DocArea>
        <Page>
          <CropMark />
          {docLines.map((line, i) => (
            <Line key={i} $indent={line.indent} $short={line.short}>
              {renderLine(line.t)}
            </Line>
          ))}
        </Page>
      </DocArea>

      <ScrollCol>
        <ScrollTop>
          <GripLines />
          <UpArrow />
        </ScrollTop>
        <ScrollThumb />
        <ScrollBottom>
          <DownArrow />
          <UpArrow />
          <ScrollDot />
          <DownArrow />
        </ScrollBottom>
      </ScrollCol>

      <Panel>
        <PanelHead>
          样式和格式
          <Caret />
          <PanelClose>
            <X size={14} strokeWidth={1} />
          </PanelClose>
        </PanelHead>
        <StyleSelect>
          普通(网站)
          <Caret $c="#666" />
        </StyleSelect>
        <PanelBtns>
          <PanelBtn $w={77}>新样式...</PanelBtn>
          <PanelBtn $w={77}>清除格式</PanelBtn>
        </PanelBtns>
        <PanelLink>请选择要应用的格式</PanelLink>
        <StyleList>
          {styleItems.map((item) => (
            <StyleItem key={item.name} $size={item.size} $weight={item.weight} $on={item.on}>
              {item.name}
              {item.mark ? <DefaultMark>{item.mark}</DefaultMark> : <ReturnMark />}
            </StyleItem>
          ))}
        </StyleList>
        <PanelFoot>
          显示:
          <ShowSelect>有效样式</ShowSelect>
        </PanelFoot>
      </Panel>

      <Rail>
        <RailGrip />
        {railIcons.map((icon, i) => (
          <RailBtn key={i} $on={i === 0}>
            {icon}
          </RailBtn>
        ))}
        <RailDivider />
        <RailMore>
          <MoreDot />
          <MoreDot />
          <MoreDot />
        </RailMore>
      </Rail>
    </Workspace>

    <StatusBar>
      <StatusCell $w={53} $pl={9}>页码: 1</StatusCell>
      <StatusCell $w={66} $pl={9}>页面: 1/2</StatusCell>
      <StatusCell $w={158} $pl={8} $gap={16}>
        <span>节: 1/1</span>
        <span>设置值: 11.3厘米</span>
      </StatusCell>
      <StatusCell $w={85} $pl={9} $gap={11}>
        <span>行: 9</span>
        <span>列: 2</span>
      </StatusCell>
      <StatusCell $w={93} $pl={8}>字数: 888/888</StatusCell>
      <StatusCell $w={87} $pl={9} $gap={4}>
        <I s={14} c="#666"><path d="M2 2.5h12v11H2zM5.5 6l5 4M10.5 6l-5 4" /></I>
        文档校对
      </StatusCell>
      <StatusCell $w={80} $pl={11} $gap={4} $noline>
        <Shield size={15} strokeWidth={1} />
        未认证
      </StatusCell>
      <StatusRight>
        <ViewBtn>
          <Maximize size={14} strokeWidth={1.2} />
        </ViewBtn>
        <ViewBtn>
          <BookOpen size={15} strokeWidth={1.2} />
        </ViewBtn>
        <ViewBtn $on>
          <I><path d="M3 1.5h7l3 3v10H3zM5.5 7.5h5M5.5 10.5h5" /></I>
        </ViewBtn>
        <ViewBtn>
          <I><rect x="1.5" y="2.5" width="13" height="11" rx="1" /><path d="M4 5.5h1M7 5.5h5M4 8h1M7 8h5M4 10.5h1M7 10.5h5" /></I>
        </ViewBtn>
        <ViewBtn>
          <Globe size={15} strokeWidth={1.2} />
        </ViewBtn>
        <ViewBtn>
          <I><ellipse cx="8" cy="10" rx="6.5" ry="4" /><circle cx="8" cy="10" r="2" /><path d="M8 1.5V4M3 3l1.5 2M13 3l-1.5 2" /></I>
        </ViewBtn>
        <MenuSep $ml={8} />
        <ZoomLabel>
          100%
          <Caret />
        </ZoomLabel>
        <ZoomMinus />
        <ZoomTrack>
          <ZoomKnob />
        </ZoomTrack>
        <Slot $w={18}>
          <Plus size={16} strokeWidth={1.6} />
        </Slot>
        <Slot $w={36}>
          <I><path d="M2 5V2h3M11 2h3v3M14 11v3h-3M5 14H2v-3M8 5v1M8 10v1" /></I>
        </Slot>
      </StatusRight>
    </StatusBar>

    <Dialog>
      <DialogTitle>
        <svg width="16" height="16" viewBox="0 0 16 16">
          <rect width="16" height="16" rx="3" fill="#3f9bee" />
          <WLogo />
        </svg>
        段落
        <DialogClose>
          <X size={17} strokeWidth={1.1} />
        </DialogClose>
      </DialogTitle>
      <TabStrip>
        <DlgTab $w={96} $on>缩进和间距(I)</DlgTab>
        <DlgTab $w={98}>换行和分页(P)</DlgTab>
      </TabStrip>
      <TabPanel>
        <SectionHead>常规</SectionHead>
        <FormRow $mt={7} $cols="74px 121px 69px auto">
          <span>对齐方式(G):</span>
          <Select $w={115}>
            两端对齐
            <BlackCaret />
          </Select>
          <span>大纲级别(O):</span>
          <Select $w={136}>
            正文文本
            <BlackCaret />
          </Select>
        </FormRow>
        <FormRow $mt={6} $h={22} $cols="74px 121px auto">
          <span>方向:</span>
          <RadioLabel>
            <Radio />
            从右向左(F)
          </RadioLabel>
          <RadioLabel>
            <Radio $on />
            从左向右(L)
          </RadioLabel>
        </FormRow>

        <SectionHead $mt={9}>缩进</SectionHead>
        <FormRow $mt={7}>
          <span>文本之前(R):</span>
          <Spinner value="-2.5" />
          <Unit>
            字符
            <Caret $c="#222" />
          </Unit>
          <span>特殊格式(S):</span>
          <span>度量值(Y):</span>
        </FormRow>
        <FormRow $mt={3}>
          <span>文本之后(X):</span>
          <Spinner value="-2.5" />
          <Unit>
            字符
            <Caret $c="#222" />
          </Unit>
          <Select $w={84}>
            <span />
            <BlackCaret />
          </Select>
          <Spinner value="" />
          <Unit>
            字符
            <Caret $c="#222" />
          </Unit>
        </FormRow>
        <CheckRow $mt={8}>
          <CheckBox>
            <I s={12} c="#333"><path d="M3 8l3.5 4L13 4" /></I>
          </CheckBox>
          如果定义了文档网格，则自动调整右缩进(D)
        </CheckRow>

        <SectionHead $mt={11}>间距</SectionHead>
        <FormRow $mt={7}>
          <span>段前(B):</span>
          <Spinner value="0" />
          <Unit>
            行
            <Caret $c="#222" />
          </Unit>
          <span>行距(N):</span>
          <span>设置值(A):</span>
        </FormRow>
        <FormRow $mt={3}>
          <span>段后(E):</span>
          <Spinner value="0" />
          <Unit>
            行
            <Caret $c="#222" />
          </Unit>
          <Select $w={84}>
            1.5 倍行距
            <BlackCaret />
          </Select>
          <Spinner value="1.5" />
          <Unit>倍</Unit>
        </FormRow>
        <CheckRow $mt={8}>
          <CheckBox>
            <I s={12} c="#333"><path d="M3 8l3.5 4L13 4" /></I>
          </CheckBox>
          如果定义了文档网格，则与网格对齐(W)
        </CheckRow>

        <SectionHead $mt={17}>预览</SectionHead>
        <Preview>
          <PreviewGrey>{previewGrey}</PreviewGrey>
          <PreviewGrey>{previewGrey}</PreviewGrey>
          <PreviewGrey>{previewGrey}</PreviewGrey>
          <PreviewDark>盼望着……翘首以盼的新年过了，街市上车水马龙，人山人海，好不热闹。34 瞧，拎着大大小</PreviewDark>
          <PreviewDark $mt={5}>袋的人在街上行走，汽车的鸣笛声，商店的叫卖声，人的脚步声……编织成热闹而又吉祥的交响</PreviewDark>
          <PreviewDark $mt={2} $h={4}>曲。春节越来越近了，年味儿越来越浓。</PreviewDark>
        </Preview>
      </TabPanel>
      <DialogFoot>
        <DlgBtn>制表位(T)...</DlgBtn>
        <DlgBtn $ml={185} $primary>确定</DlgBtn>
        <DlgBtn $ml={8}>取消</DlgBtn>
      </DialogFoot>
      <RedFrame />
    </Dialog>

    <Watermark>
      <ActivateText>激活 Winc</ActivateText>
      <ActivateHint>转到“设置”以激活 Windows。</ActivateHint>
      <BrandSwirl width="44" height="44" viewBox="0 0 44 44">
        <path d="M42 1C24 2 7 12 2 25c-3 9 4 13 10 12C5 31 14 14 42 1z" fill="#62b4e8" />
        <path d="M10 26c4-9 22-10 32-6-4 8-14 13-20 11 4-3 6-7 2-9-4-1-10 1-14 4z" fill="#58bd6e" />
        <path d="M11 43c8-1 16-5 20-10-5 2-11 3-14 4z" fill="#d9d95c" />
      </BrandSwirl>
      <BrandName>极光下载站</BrandName>
      <BrandUrl>www.xz7.com</BrandUrl>
    </Watermark>
  </Shell>
);

export default App;
